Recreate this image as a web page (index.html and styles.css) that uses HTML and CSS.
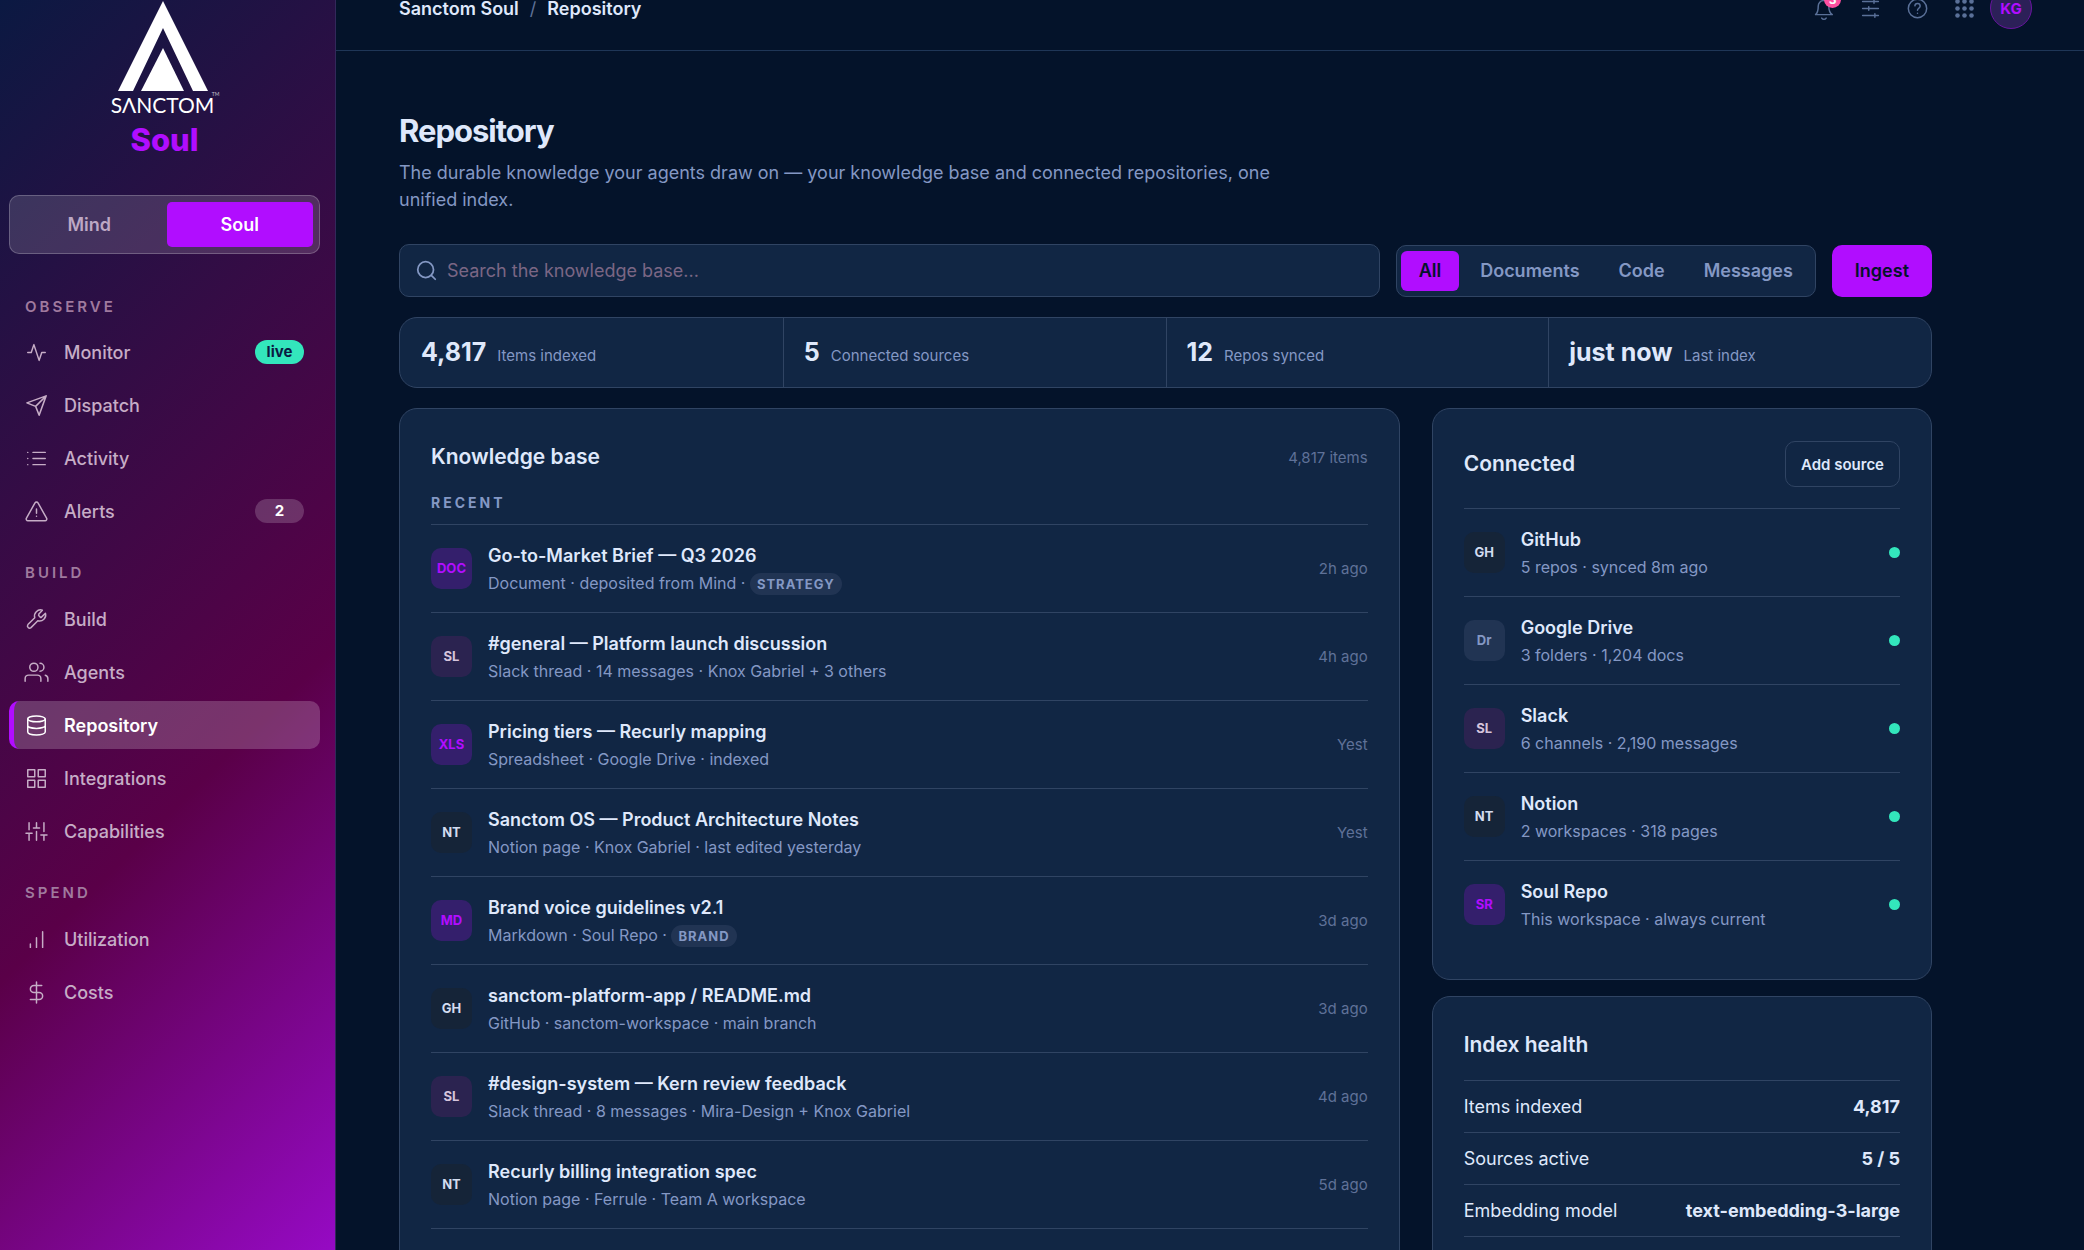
FILE: index.html
```
<!DOCTYPE html>
<html lang="en">
<head>
    <meta charset="UTF-8">
    <meta name="viewport" content="width=device-width, initial-scale=1.0">
    <title>Sanctom Soul - Repository</title>
    <link rel="stylesheet" href="styles.css">
</head>
<body>
    <div class="app">
        <aside class="sidebar">
            <div class="brand">
                <div class="logo">
                    <svg class="brand-mark" viewBox="0 0 90 92" fill="#fff">
                        <path d="M45 1 L90 91 H75 L45 28 L15 91 H0 Z"/>
                        <path d="M45 48 L66 91 H23 Z"/>
                    </svg>
                    <div class="brand-word">SΛNCTOM<span class="tm">TM</span></div>
                </div>
                <div class="brand-product">Soul</div>
            </div>

            <div class="switch">
                <button type="button">Mind</button>
                <button type="button" class="on">Soul</button>
            </div>

            <nav class="nav">
                <h3 class="nav-label clipped">Observe</h3>
                <a class="nav-item" href="#"><svg class="icon" viewBox="0 0 24 24"><path d="M22 12h-4l-3 9L9 3l-3 9H2"/></svg>Monitor<span class="pill live">live</span></a>
                <a class="nav-item" href="#"><svg class="icon" viewBox="0 0 24 24"><path d="M23 1 11 13M23 1l-8 22-4-10-10-4z"/></svg>Dispatch</a>
                <a class="nav-item" href="#"><svg class="icon" viewBox="0 0 24 24"><path d="M8 5h14M8 12h14M8 19h14M2 5h.01M2 12h.01M2 19h.01"/></svg>Activity</a>
                <a class="nav-item" href="#"><svg class="icon" viewBox="0 0 24 24"><path d="M10.300 2.200 0.500 19.500a2 2 0 0 0 1.700 3h19.600a2 2 0 0 0 1.700-3L13.700 2.200a2 2 0 0 0-3.400 0zM12 9v5M12 17.500h.01"/></svg>Alerts<span class="pill">2</span></a>

                <h3 class="nav-label">Build</h3>
                <a class="nav-item" href="#"><svg class="icon" viewBox="0 0 24 24"><path d="M14.700 6.300a1 1 0 0 0 0 1.400l1.600 1.600a1 1 0 0 0 1.400 0l4.500-4.500a7 7 0 0 1-8.700 8.700l-7.800 7.800a2.500 2.500 0 0 1-3.500-3.500l7.800-7.800a7 7 0 0 1 8.700-8.700l-4 4.500z"/></svg>Build</a>
                <a class="nav-item" href="#"><svg class="icon" viewBox="0 0 24 24"><path d="M17 22v-3a4 4 0 0 0-4-4H3a4 4 0 0 0-4 4v3M25 22v-3a4 4 0 0 0-3-3.870M16 1.500a4.500 4.500 0 0 1 0 9"/><circle cx="9" cy="6" r="4.700"/></svg>Agents</a>
                <a class="nav-item active" href="#"><svg class="icon" viewBox="0 0 24 24"><ellipse cx="12" cy="4.500" rx="10" ry="3.300"/><path d="M2 4.500v15c0 1.800 4.500 3.300 10 3.300s10-1.500 10-3.300v-15M2 12c0 1.800 4.500 3.300 10 3.300s10-1.500 10-3.300"/></svg>Repository</a>
                <a class="nav-item" href="#"><svg class="icon" viewBox="0 0 24 24"><path d="M2 2h8v8H2zM14 2h8v8h-8zM14 14h8v8h-8zM2 14h8v8H2z"/></svg>Integrations</a>
                <a class="nav-item" href="#"><svg class="icon" viewBox="0 0 24 24"><path d="M3.500 22v-8M3.500 10V2M12 22V12M12 8V2M20.500 22v-6M20.500 12V2M0 14h7M8.500 8h7M17 16h7"/></svg>Capabilities</a>

                <h3 class="nav-label">Spend</h3>
                <a class="nav-item" href="#"><svg class="icon" viewBox="0 0 24 24"><path d="M12 21V10M19 21V3M5 21v-4"/></svg>Utilization</a>
                <a class="nav-item" href="#"><svg class="icon" viewBox="0 0 24 24"><path d="M12 0v24M18 4H9a4 4 0 0 0 0 8h6a4 4 0 0 1 0 8H5"/></svg>Costs</a>
            </nav>
        </aside>

        <main class="main">
            <header class="topbar">
                <div class="crumbs"><a href="#">Sanctom Soul</a><span class="slash">/</span><span>Repository</span></div>
                <div class="tools">
                    <button type="button" aria-label="Notifications"><svg class="icon" viewBox="0 0 24 24"><path d="M18 9A6 6 0 0 0 6 9c0 7-3 10-3 10h19s-4-3-4-10M10 23a3 3 0 0 0 5 0"/></svg><span class="count">3</span></button>
                    <button type="button" aria-label="Settings"><svg class="icon" viewBox="0 0 24 24"><path d="M3 4h18M3 12h18M3 20h18M16 2v4M10 10v4M17 18v4"/></svg></button>
                    <button type="button" aria-label="Help"><svg class="icon" viewBox="0 0 24 24"><circle cx="12" cy="12" r="10.500"/><path d="M9 9a3 3 0 0 1 6 .5c0 2-3 2.500-3 4.500M12 17.500h.01"/></svg></button>
                    <button type="button" aria-label="Apps"><svg class="icon dots" viewBox="0 0 24 24"><circle cx="4" cy="4" r="2.600"/><circle cx="12" cy="4" r="2.600"/><circle cx="20" cy="4" r="2.600"/><circle cx="4" cy="12" r="2.600"/><circle cx="12" cy="12" r="2.600"/><circle cx="20" cy="12" r="2.600"/><circle cx="4" cy="20" r="2.600"/><circle cx="12" cy="20" r="2.600"/><circle cx="20" cy="20" r="2.600"/></svg></button>
                    <button type="button" class="avatar">KG</button>
                </div>
            </header>

            <div class="content">
                <h1>Repository</h1>
                <p class="lead">The durable knowledge your agents draw on — your knowledge base and connected repositories, one unified index.</p>

                <div class="controls">
                    <label class="search">
                        <svg class="icon" viewBox="0 0 24 24"><circle cx="11" cy="11" r="9"/><path d="m22 22-4.500-4.500"/></svg>
                        <input type="text" placeholder="Search the knowledge base..." aria-label="Search the knowledge base">
                    </label>
                    <div class="filters">
                        <button type="button" class="on">All</button>
                        <button type="button">Documents</button>
                        <button type="button">Code</button>
                        <button type="button">Messages</button>
                    </div>
                    <button type="button" class="ingest">Ingest</button>
                </div>

                <div class="stats">
                    <div class="stat"><strong>4,817</strong><span>Items indexed</span></div>
                    <div class="stat"><strong>5</strong><span>Connected sources</span></div>
                    <div class="stat"><strong>12</strong><span>Repos synced</span></div>
                    <div class="stat"><strong>just now</strong><span>Last index</span></div>
                </div>

                <div class="columns">
                    <section class="card">
                        <div class="card-head"><h2>Knowledge base</h2><span class="meta">4,817 items</span></div>
                        <h3 class="list-label">Recent</h3>
                        <ul class="rows recent">
                            <li class="row"><span class="tile accent">DOC</span><div class="info"><b>Go-to-Market Brief — Q3 2026</b><small>Document · deposited from Mind · <em class="tag">Strategy</em></small></div><span class="meta">2h ago</span></li>
                            <li class="row"><span class="tile plum">SL</span><div class="info"><b>#general — Platform launch discussion</b><small>Slack thread · 14 messages · Knox Gabriel + 3 others</small></div><span class="meta">4h ago</span></li>
                            <li class="row"><span class="tile accent">XLS</span><div class="info"><b>Pricing tiers — Recurly mapping</b><small>Spreadsheet · Google Drive · indexed</small></div><span class="meta">Yest</span></li>
                            <li class="row"><span class="tile dark">NT</span><div class="info"><b>Sanctom OS — Product Architecture Notes</b><small>Notion page · Knox Gabriel · last edited yesterday</small></div><span class="meta">Yest</span></li>
                            <li class="row"><span class="tile accent">MD</span><div class="info"><b>Brand voice guidelines v2.1</b><small>Markdown · Soul Repo · <em class="tag">Brand</em></small></div><span class="meta">3d ago</span></li>
                            <li class="row"><span class="tile dark">GH</span><div class="info"><b>sanctom-platform-app / README.md</b><small>GitHub · sanctom-workspace · main branch</small></div><span class="meta">3d ago</span></li>
                            <li class="row"><span class="tile plum">SL</span><div class="info"><b>#design-system — Kern review feedback</b><small>Slack thread · 8 messages · Mira-Design + Knox Gabriel</small></div><span class="meta">4d ago</span></li>
                            <li class="row"><span class="tile dark">NT</span><div class="info"><b>Recurly billing integration spec</b><small>Notion page · Ferrule · Team A workspace</small></div><span class="meta">5d ago</span></li>
                        </ul>
                    </section>

                    <div class="side">
                        <section class="card">
                            <div class="card-head tall"><h2>Connected</h2><button type="button" class="outline">Add source</button></div>
                            <ul class="rows">
                                <li class="row"><span class="tile dark">GH</span><div class="info"><b>GitHub</b><small>5 repos · synced 8m ago</small></div><i class="dot"></i></li>
                                <li class="row"><span class="tile slate">Dr</span><div class="info"><b>Google Drive</b><small>3 folders · 1,204 docs</small></div><i class="dot"></i></li>
                                <li class="row"><span class="tile plum">SL</span><div class="info"><b>Slack</b><small>6 channels · 2,190 messages</small></div><i class="dot"></i></li>
                                <li class="row"><span class="tile dark">NT</span><div class="info"><b>Notion</b><small>2 workspaces · 318 pages</small></div><i class="dot"></i></li>
                                <li class="row"><span class="tile accent">SR</span><div class="info"><b>Soul Repo</b><small>This workspace · always current</small></div><i class="dot"></i></li>
                            </ul>
                        </section>

                        <section class="card">
                            <div class="card-head mid"><h2>Index health</h2></div>
                            <dl class="health">
                                <div><dt>Items indexed</dt><dd>4,817</dd></div>
                                <div><dt>Sources active</dt><dd>5 / 5</dd></div>
                                <div><dt>Embedding model</dt><dd>text-embedding-3-large</dd></div>
                            </dl>
                        </section>
                    </div>
                </div>
            </div>
        </main>
    </div>
</body>
</html>
```
FILE: styles.css
```
:root {
    --bg: #04132a;
    --card: #112644;
    --line: #304463;
    --text: #dfe8fb;
    --muted: #8498c4;
    --dim: #5f7198;
    --accent: #b10dff;
    --green: #33e6bc;
}

* { box-sizing: border-box; }
body { margin: 0; background: var(--bg); color: var(--text); font-family: Inter, "Liberation Sans", sans-serif; font-size: 18px; }
h1, h2, h3, p, ul, dl, dd { margin: 0; padding: 0; }
ul { list-style: none; }
a { color: inherit; text-decoration: none; }
button { font: inherit; color: inherit; background: none; border: 0; padding: 0; cursor: pointer; }
.icon { width: 21px; height: 21px; flex: none; fill: none; stroke: currentColor; stroke-width: 1.7; stroke-linecap: round; stroke-linejoin: round; overflow: visible; }

.app { display: flex; height: 100vh; overflow: hidden; }

/* Sidebar */
.sidebar { width: 336px; flex: none; padding: 0 15px 0 9px; border-right: 1px solid #33285a; background: linear-gradient(135deg, #0b1942 0%, #5a0048 62%, #960ac4 100%); }
.brand { display: flex; flex-direction: column; align-items: center; }
.logo { display: flex; flex-direction: column; align-items: center; padding-right: 4px; }
.brand-mark { width: 90px; height: 92px; display: block; }
.brand-word { position: relative; margin-top: 2px; font-family: Lato, sans-serif; font-size: 21px; line-height: 22px; color: #fff; }
.tm { position: absolute; right: -5px; top: -5px; font-size: 5px; line-height: 10px; opacity: 0.7; }
.brand-product { margin: 6px 0 37px; font-size: 31px; line-height: 36px; font-weight: 800; color: var(--accent); }

.switch { display: flex; gap: 4px; padding: 6px; border: 1px solid rgba(255, 255, 255, 0.22); border-radius: 10px; background: rgba(255, 255, 255, 0.14); }
.switch button { flex: 1; height: 45px; border-radius: 5px; font-weight: 600; color: #bda8c4; }
.switch .on { background: var(--accent); color: #fff; }

.nav { display: flex; flex-direction: column; gap: 5px; margin-top: 38px; }
.nav-label { height: 30px; margin: 18px 0 2px; padding-left: 16px; font-size: 15px; line-height: 30px; font-weight: 600; letter-spacing: 3px; text-transform: uppercase; color: #a07a9e; }
.nav-label.clipped { height: 20px; margin: 0 0 11px; overflow: hidden; }
.nav-item { display: flex; align-items: center; gap: 17px; height: 48px; padding: 0 16px 0 12px; border-left: 5px solid transparent; border-radius: 10px; font-weight: 500; color: #c6adc6; }
.nav-item.active { border-left-color: var(--accent); background: rgba(255, 255, 255, 0.2); font-weight: 600; color: #fff; }
.pill { width: 49px; margin-left: auto; border-radius: 12px; background: rgba(255, 255, 255, 0.18); font-size: 15px; line-height: 24px; font-weight: 700; text-align: center; color: #fff; }
.pill.live { background: var(--green); color: #0a1a42; }

/* Top bar, scrolled partly out of view */
.main { flex: 1; min-width: 0; }
.topbar { display: flex; justify-content: space-between; align-items: center; height: 85px; margin-top: -34px; padding: 0 52px 0 63px; border-bottom: 1px solid #1f3657; }
.crumbs { display: flex; gap: 11px; font-weight: 600; }
.slash { font-weight: 400; color: var(--dim); }
.tools { display: flex; gap: 5px; color: #5a7098; }
.tools button { position: relative; display: flex; align-items: center; justify-content: center; width: 42px; height: 42px; }
.dots { fill: currentColor; stroke: none; }
.count { position: absolute; left: 22px; top: 4px; width: 17px; height: 17px; border-radius: 50%; background: #ff4fa0; color: #fff; font-size: 12px; line-height: 17px; font-weight: 700; text-align: center; }
.tools .avatar { border: 1px solid #6a14a0; border-radius: 50%; background: #2c2058; color: var(--accent); font-size: 15px; font-weight: 700; }

/* Page */
.content { width: calc(100% - 89px); max-width: 1660px; padding: 59px 63px; }
h1 { font-size: 31px; line-height: 42px; font-weight: 700; letter-spacing: -1px; }
.lead { max-width: 900px; margin-top: 7px; line-height: 27px; color: var(--muted); }

.controls { display: flex; align-items: center; gap: 16px; margin-top: 31px; }
.search { flex: 1; display: flex; align-items: center; gap: 8px; height: 53px; padding: 0 16px; border: 1px solid var(--line); border-radius: 10px; background: var(--card); color: var(--muted); }
.search .icon { stroke-width: 2; }
.search input { flex: 1; min-width: 0; border: 0; outline: 0; background: none; font: inherit; color: var(--text); }
.search input::placeholder { color: #7b6684; opacity: 1; }
.filters { display: flex; gap: 3px; padding: 5px 4px; border: 1px solid var(--line); border-radius: 10px; background: var(--card); }
.filters button { height: 40px; padding: 0 18px; border-radius: 6px; font-weight: 600; color: var(--muted); }
.filters .on { background: var(--accent); color: var(--bg); }
.ingest { height: 52px; padding: 0 23px; border-radius: 10px; background: var(--accent); color: var(--bg); font-weight: 600; }

.stats { display: grid; grid-template-columns: repeat(4, 1fr); margin-top: 20px; border: 1px solid var(--line); border-radius: 18px; background: var(--card); }
.stat { display: flex; align-items: baseline; gap: 11px; padding: 18px 20px; border-left: 1px solid var(--line); }
.stat:first-child { padding-left: 21px; border-left: 0; }
.stat strong { font-size: 25px; line-height: 33px; }
.stat span { font-size: 15px; color: var(--muted); }

.columns { display: grid; grid-template-columns: 2fr 1fr; gap: 32px; margin-top: 20px; }
.side { display: grid; gap: 16px; }
.card { padding: 31px; border: 1px solid var(--line); border-radius: 18px; background: var(--card); }
.card-head { display: flex; justify-content: space-between; align-items: center; height: 34px; }
.card-head.mid { height: 52px; padding-bottom: 19px; }
.card-head.tall { height: 68px; padding-bottom: 20px; }
h2 { font-size: 21px; line-height: 34px; font-weight: 600; }
.meta { font-size: 15px; color: var(--dim); }
.list-label { margin-top: 14px; padding-bottom: 6px; font-size: 14px; line-height: 30px; font-weight: 700; letter-spacing: 3px; text-transform: uppercase; color: var(--muted); }
.outline { height: 46px; padding: 0 15px; border: 1px solid var(--line); border-radius: 10px; font-size: 15px; font-weight: 600; }

.row { display: flex; align-items: center; gap: 16px; height: 88px; border-top: 1px solid var(--line); }
.recent { border-bottom: 1px solid var(--line); }
.info { flex: 1; min-width: 0; }
.info b { display: block; line-height: 28px; font-weight: 600; }
.info small { display: block; font-size: 16px; line-height: 26px; color: var(--muted); }
.tile { width: 41px; height: 41px; border-radius: 10px; font-size: 13px; line-height: 41px; font-weight: 700; text-align: center; }
.tile.accent { background: #341f6c; color: var(--accent); }
.tile.plum { background: #2b2350; color: #d6c4dc; }
.tile.dark { background: #152438; color: #d3dcf0; }
.tile.slate { background: #213453; color: var(--muted); }
.tag { display: inline-block; padding: 0 7px; border-radius: 11px; background: #213453; font-size: 13px; line-height: 22px; font-style: normal; font-weight: 700; letter-spacing: 1px; text-transform: uppercase; }
.dot { width: 11px; height: 11px; border-radius: 50%; background: var(--green); }

.health div { display: flex; justify-content: space-between; border-top: 1px solid var(--line); line-height: 51px; }
.health div:last-child { border-bottom: 1px solid var(--line); }
.health dd { font-weight: 700; }
```
